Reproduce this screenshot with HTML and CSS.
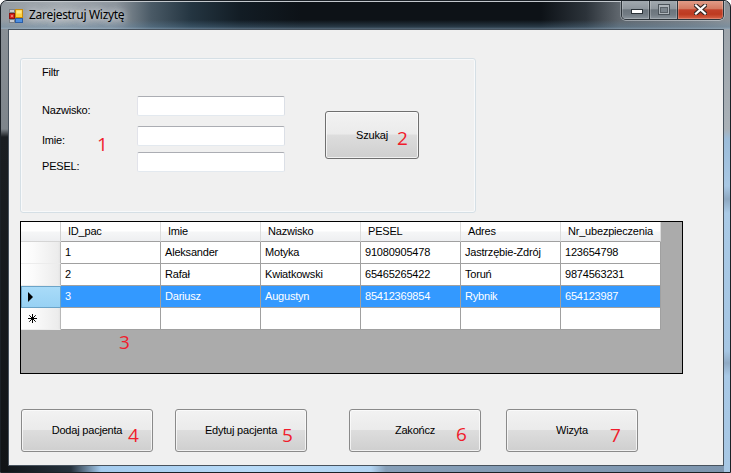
FILE: index.html
```html
<!DOCTYPE html>
<html lang="pl">
<head>
<meta charset="utf-8">
<title>Zarejestruj Wizytę</title>
<link rel="stylesheet" href="styles.css">
</head>
<body>
<div class="window">
  <div class="titlebar">
    <svg class="app-icon" width="16" height="16" viewBox="0 0 16 16">
      <rect x="1.5" y="1.5" width="5" height="3" fill="#c9ccd0" stroke="#7d8287"/>
      <rect x="1.5" y="5.5" width="5" height="5" fill="#d8261f" stroke="#8c1410"/>
      <rect x="3" y="7" width="2" height="2" fill="#f27a6a"/>
      <rect x="1.5" y="11.5" width="5" height="3" fill="#c9ccd0" stroke="#7d8287"/>
      <rect x="7.5" y="1.5" width="7" height="8" fill="#ffd23f" stroke="#c98a0a"/>
      <rect x="8.5" y="2.5" width="5" height="3" fill="#ffe88a"/>
      <rect x="7.5" y="10.5" width="7" height="4" fill="#4d8fe0" stroke="#2a5ea8"/>
    </svg>
    <span class="title">Zarejestruj Wizytę</span>
    <div class="caption-buttons">
      <div class="cbtn cbtn-min">
        <svg width="12" height="5" viewBox="0 0 12 5"><rect x="0.5" y="0.5" width="11" height="4" fill="#ffffff" stroke="#2b3238"/></svg>
      </div>
      <div class="cbtn cbtn-max">
        <svg width="12" height="11" viewBox="0 0 12 11"><rect x="0.5" y="0.5" width="11" height="10" fill="#aeb5bb" stroke="#4c545b"/><rect x="2.5" y="3.5" width="7" height="5" fill="#7c858d" stroke="#5a6269"/></svg>
      </div>
      <div class="cbtn cbtn-close">
        <svg width="13" height="11" viewBox="0 0 13 11"><path d="M2 1.5 L11 9.5 M11 1.5 L2 9.5" stroke="#3a2a26" stroke-width="4.4" stroke-linecap="square"/><path d="M2 1.5 L11 9.5 M11 1.5 L2 9.5" stroke="#ffffff" stroke-width="2.2" stroke-linecap="square"/></svg>
      </div>
    </div>
  </div>

  <div class="client">
    <div class="group">
      <div class="group-title">Filtr</div>
      <div class="filter">
        <div class="fields">
          <div class="field"><span class="field-label">Nazwisko:</span><input class="textbox" type="text"></div>
          <div class="field field-imie"><span class="field-label">Imie:</span><input class="textbox" type="text"></div>
          <div class="field field-pesel"><span class="field-label">PESEL:</span><input class="textbox" type="text"></div>
        </div>
        <button class="btn btn-search" type="button">Szukaj<span class="mark mark-2">2</span></button>
      </div>
      <span class="mark mark-1">1</span>
    </div>

    <div class="grid">
      <div class="cell corner"></div>
      <div class="cell head">ID_pac</div>
      <div class="cell head">Imie</div>
      <div class="cell head">Nazwisko</div>
      <div class="cell head">PESEL</div>
      <div class="cell head">Adres</div>
      <div class="cell head">Nr_ubezpieczenia</div>

      <div class="cell rowhead"></div>
      <div class="cell">1</div>
      <div class="cell">Aleksander</div>
      <div class="cell">Motyka</div>
      <div class="cell">91080905478</div>
      <div class="cell">Jastrzębie-Zdrój</div>
      <div class="cell">123654798</div>

      <div class="cell rowhead"></div>
      <div class="cell">2</div>
      <div class="cell">Rafał</div>
      <div class="cell">Kwiatkowski</div>
      <div class="cell">65465265422</div>
      <div class="cell">Toruń</div>
      <div class="cell">9874563231</div>

      <div class="cell rowhead rowhead-current"><span class="row-arrow"></span></div>
      <div class="cell sel">3</div>
      <div class="cell sel">Dariusz</div>
      <div class="cell sel">Augustyn</div>
      <div class="cell sel">85412369854</div>
      <div class="cell sel">Rybnik</div>
      <div class="cell sel">654123987</div>

      <div class="cell rowhead rowhead-new">
        <svg width="9" height="9" viewBox="0 0 9 9"><path d="M4.5 0 V9 M0 4.5 H9 M1.3 1.3 L7.7 7.7 M7.7 1.3 L1.3 7.7" stroke="#000" stroke-width="1"/></svg>
      </div>
      <div class="cell"></div>
      <div class="cell"></div>
      <div class="cell"></div>
      <div class="cell"></div>
      <div class="cell"></div>
      <div class="cell"></div>

      <span class="mark mark-3">3</span>
    </div>

    <div class="actions">
      <button class="btn btn-action" type="button">Dodaj pacjenta<span class="mark mark-4">4</span></button>
      <button class="btn btn-action btn-edit" type="button">Edytuj pacjenta<span class="mark mark-5">5</span></button>
      <button class="btn btn-action btn-end" type="button">Zakończ<span class="mark mark-6">6</span></button>
      <button class="btn btn-action btn-visit" type="button">Wizyta<span class="mark mark-7">7</span></button>
    </div>
  </div>
</div>
</body>
</html>
```

FILE: styles.css
```css
html, body {
  margin: 0;
  padding: 0;
  background: #ffffff;
}

body {
  font-family: "Liberation Sans", Arial, sans-serif;
  font-size: 11px;
  letter-spacing: -0.2px;
  color: #000;
}

.window {
  width: 731px;
  height: 473px;
  box-sizing: border-box;
  border: 1px solid #1b2127;
  border-radius: 7px 7px 0 0;
  padding: 0 6px 6px 7px;
  display: flex;
  flex-direction: column;
  overflow: hidden;
  background:
    linear-gradient(#c3c8cd, #c3c8cd) 0 0 / 100% 1px no-repeat,
    linear-gradient(180deg, rgba(0,0,0,0) 0, rgba(0,0,0,0) 19px, rgba(95,135,165,0.35) 26px, rgba(150,180,205,0.55) 28px) 0 0 / 100% 28px no-repeat,
    linear-gradient(90deg, #959ca2 0, #a3aab0 60px, #8e969d 115px, #4a5a66 150px, #243541 190px, #121c24 240px, #0d1217 300px, #0d1217 540px, #2c333a 585px, #5f666d 618px, #7d848b 700px, #8c9399 100%) 0 0 / 100% 28px no-repeat,
    linear-gradient(180deg, #8c9298 0, #7e858b 128px, #1a1e22 136px, #111417 100%) 0 0 / 7px 100% no-repeat,
    linear-gradient(180deg, #9aa1a8 0, #aab1b7 128px, #9cbcd9 138px, #a9c8e4 185px, #8ea8c1 198px, #aacae6 212px, #a6c6e3 350px, #90aac4 362px, #a9c9e6 375px, #a7c7e4 100%) 100% 0 / 6px 100% no-repeat,
    linear-gradient(90deg, #0f1317 0, #26323d 70px, #a4cbee 100px, #b7daf7 250px, #b2d4f2 370px, #869fb8 385px, #7d95ae 100%) 0 100% / 100% 6px no-repeat,
    #7d8790;
}

/* ---------- title bar ---------- */
.titlebar {
  height: 28px;
  flex: none;
  display: flex;
  align-items: flex-start;
}

.app-icon {
  margin-top: 7px;
  flex: none;
}

.title {
  margin-left: 5px;
  margin-top: 5px;
  font-family: "Noto Sans", "Open Sans", sans-serif;
  font-size: 12px;
  line-height: 17px;
  letter-spacing: -0.3px;
  color: #000;
  text-shadow: 0 0 6px rgba(235, 240, 245, 0.9), 0 0 10px rgba(235, 240, 245, 0.7);
}

.caption-buttons {
  margin-left: auto;
  margin-top: -1px;
  display: flex;
  height: 20px;
  box-sizing: border-box;
  border: 1px solid #2d343a;
  border-top: none;
  border-radius: 0 0 5px 5px;
  overflow: hidden;
  box-shadow: 0 1px 0 rgba(230, 236, 240, 0.45), 1px 0 0 rgba(230, 236, 240, 0.35), -1px 0 0 rgba(230, 236, 240, 0.35);
}

.cbtn {
  height: 100%;
  display: flex;
  align-items: center;
  justify-content: center;
  box-sizing: border-box;
  box-shadow: inset 0 0 0 1px rgba(255, 255, 255, 0.22);
}

.cbtn-min,
.cbtn-max {
  width: 28px;
  background: linear-gradient(180deg, #a4abb1 0%, #8f979e 45%, #6c757d 52%, #737c84 78%, #8c959d 100%);
  border-right: 1px solid #2d343a;
}

.cbtn-min {
  align-items: flex-end;
  padding-bottom: 5px;
}

.cbtn-min svg {
  margin-left: 2px;
}

.cbtn-close {
  width: 45px;
  background: linear-gradient(180deg, #e3a08c 0%, #d47b62 45%, #c2412a 52%, #bd3a20 75%, #d76448 100%);
}

/* ---------- client area ---------- */
.client {
  flex: 1;
  box-sizing: border-box;
  border: 1px solid #48535e;
  background: #f0f0f0;
  display: flex;
  flex-direction: column;
  align-items: flex-start;
}

.group {
  position: relative;
  margin: 28px 0 0 11px;
  width: 456px;
  height: 155px;
  box-sizing: border-box;
  border: 1px solid #d5dfe5;
  border-radius: 3px;
  box-shadow: inset 0 0 0 1px #f8f9fa;
  padding: 7px 0 0 21px;
}

.group-title {
  line-height: 13px;
}

.filter {
  margin-top: 17px;
  display: flex;
  align-items: flex-start;
}

.field {
  display: flex;
  height: 20px;
}

.field-imie {
  margin-top: 10px;
}

.field-pesel {
  margin-top: 6px;
}

.field-label {
  width: 95px;
  line-height: 13px;
  align-self: flex-end;
  margin-bottom: -1px;
}

.textbox {
  width: 148px;
  height: 20px;
  box-sizing: border-box;
  margin: 0;
  padding: 0 2px;
  border: 1px solid;
  border-color: #abadb3 #dbdfe6 #e3e9ef #e2e3ea;
  border-radius: 2px;
  background: #ffffff;
  font: inherit;
  outline: none;
}

/* ---------- buttons ---------- */
.btn {
  position: relative;
  display: flex;
  align-items: center;
  justify-content: center;
  box-sizing: border-box;
  margin: 0;
  padding: 0;
  border: 1px solid #8a8a8a;
  border-radius: 3px;
  background: linear-gradient(180deg, #f2f2f2 0%, #ebebeb 48%, #dddddd 50%, #cfcfcf 100%);
  box-shadow: inset 0 0 0 1px rgba(252, 252, 252, 0.75);
  font-family: "Liberation Sans", Arial, sans-serif;
  font-size: 11px;
  letter-spacing: -0.2px;
  line-height: 13px;
  color: #000;
}

.btn-search {
  width: 94px;
  height: 48px;
  margin: 15px 0 0 40px;
  border-color: #6f6f6f;
}

.actions {
  margin: 35px 0 0 12px;
  display: flex;
}

.btn-action {
  width: 132px;
  height: 43px;
}

.btn-edit {
  margin-left: 22px;
}

.btn-end {
  margin-left: 42px;
}

.btn-visit {
  margin-left: 25px;
}

/* ---------- annotation marks ---------- */
.mark {
  position: absolute;
  font-family: "Open Sans", "Noto Sans", sans-serif;
  font-size: 19px;
  letter-spacing: 0;
  line-height: 1;
  color: #f01c2c;
}

.mark-1 { left: 76px; top: 76px; }
.mark-2 { left: 71px; top: 17px; }
.mark-3 { left: 98px; top: 111px; }
.mark-4 { left: 106px; top: 16px; }
.mark-5 { left: 106px; top: 16px; }
.mark-6 { left: 106px; top: 15px; }
.mark-7 { left: 103px; top: 16px; }

/* ---------- data grid ---------- */
.grid {
  position: relative;
  margin: 8px 0 0 11px;
  width: 663px;
  height: 153px;
  box-sizing: border-box;
  border: 1px solid #000;
  background: #ababab;
  display: grid;
  grid-template-columns: 40px repeat(6, 100px);
  grid-template-rows: 20px repeat(4, 22px);
  align-content: start;
}

.cell {
  box-sizing: border-box;
  background: #ffffff;
  border-right: 1px solid #a0a0a0;
  border-bottom: 1px solid #a0a0a0;
  padding-left: 4px;
  line-height: 21px;
  white-space: nowrap;
  overflow: hidden;
}

.head,
.corner {
  line-height: 19px;
  padding-left: 7px;
  background: linear-gradient(180deg, #ffffff 0%, #ffffff 45%, #f5f6f7 55%, #eeeff1 100%);
  border-right: 1px solid #dcdcdc;
  border-bottom: 1px solid #a0a0a0;
}

.corner {
  border-right-color: #d0d0d0;
  border-bottom-color: #d5d5d5;
}

.rowhead {
  padding-left: 0;
  background: linear-gradient(90deg, #ffffff 0%, #fbfbfb 30%, #ececec 95%, #e4e4e4 100%);
  border-right: 1px solid #b8b8b8;
  border-bottom: 1px solid #ececec;
  display: flex;
  align-items: center;
}

.rowhead-current {
  background: linear-gradient(180deg, #a9dbf8 0%, #97d1f4 100%);
  border: 1px solid #6ba4c8;
  padding-left: 6px;
}

.row-arrow {
  width: 0;
  height: 0;
  border-left: 5px solid #000;
  border-top: 5px solid transparent;
  border-bottom: 5px solid transparent;
}

.rowhead-new {
  padding-left: 7px;
}

.sel {
  background: #3399ff;
  color: #ffffff;
}
```
